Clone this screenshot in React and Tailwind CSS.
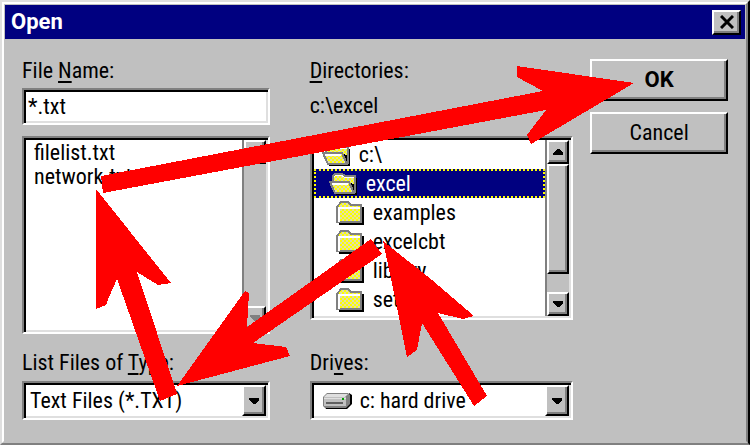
import React, { useState } from 'react';

const raised =
  'bg-[#c0c0c0] border-2 border-t-white border-l-white border-r-black border-b-black shadow-[inset_-2px_-2px_0_#808080]';
const sunken =
  'bg-white border-2 border-t-[#808080] border-l-[#808080] border-r-white border-b-white p-0.5 shadow-[inset_2px_2px_0_#000,inset_-2px_-2px_0_#dfdfdf]';

const files = ['filelist.txt', 'network.txt'];

const folders = [
  { name: 'c:\\', open: true, indent: 'pl-[8px]' },
  { name: 'excel', open: true, indent: 'pl-[15px]' },
  { name: 'examples', open: false, indent: 'pl-[22px]' },
  { name: 'excelcbt', open: false, indent: 'pl-[22px]' },
  { name: 'library', open: false, indent: 'pl-[22px]' },
  { name: 'setup', open: false, indent: 'pl-[22px]' }
];

const arrows = [
  '101,176 543,91 517,77 517,66 634,83 531,144 527,135 546,110 103,193',
  '96,189 171,283 158,285 137,272 177,394 160,401 117,279 109,297 106,305 96,309',
  '371,239 382,254 253,343 286,347 290,356 177,386 245,291 249,293 247,327',
  '383,241 432,280 474,316 463,319 438,313 487,396 474,406 422,323 417,350 407,357 397,307'
];

const FolderIcon = ({ open }) => (
  <svg width="28" height="24" viewBox="0 0 28 24" className="shrink-0" shapeRendering="crispEdges" aria-hidden="true">
    <defs>
      <pattern id="dither" width="4" height="4" patternUnits="userSpaceOnUse">
        <rect width="4" height="4" fill="#ffff00" />
        <rect width="2" height="2" fill="#dcdcb4" />
        <rect x="2" y="2" width="2" height="2" fill="#dcdcb4" />
      </pattern>
    </defs>
    {open ? (
      <>
        <path d="M26 6 H28 V23 H7 V21 H26 Z" fill="#000" />
        <path d="M4 10 V4 L6 2 H13 L16 4 H26 V20 H22 Z" fill="url(#dither)" stroke="#808080" strokeWidth="2" />
        <path d="M5 5 L7 3 H12 L15 5 H25" fill="none" stroke="#fff" strokeWidth="1" />
        <path d="M20 11 L25 19 V12 Z" fill="#000" />
        <path d="M1 10 H20 L25 21 H6 Z" fill="url(#dither)" stroke="#808080" strokeWidth="2" />
        <path d="M3 12 H19" stroke="#fff" strokeWidth="2" />
      </>
    ) : (
      <>
        <path d="M25 6 H28 V24 H3 V21 H25 Z" fill="#000" />
        <path d="M1 21 V6 L5 1 H12 L15 4 H25 V21 Z" fill="url(#dither)" stroke="#808080" strokeWidth="2" />
        <path d="M3 21 V7 H24" fill="none" stroke="#fff" strokeWidth="2" />
      </>
    )}
  </svg>
);

const DriveIcon = () => (
  <svg width="30" height="18" viewBox="0 0 30 18" className="ml-2 shrink-0" aria-hidden="true">
    <path d="M4 17 H25 L30 12 V3 L27 1 V12 L24 15 H3 Z" fill="#000" />
    <path d="M5 1 H26 L28 3 V12 L24 16 H3 L1 14 V5 Z" fill="#808080" />
    <path d="M5 2 H26 L23 5 H2 Z" fill="#dfdfdf" />
    <rect x="2" y="6" width="22" height="8" fill="#c0c0c0" />
    <path d="M2 6 H24" stroke="#fff" />
    <path d="M4 11 H21" stroke="#606060" strokeWidth="2" />
    <rect x="20" y="6" width="2" height="2" fill="#00a000" />
  </svg>
);

const Triangle = ({ up, disabled }) => (
  <svg width="10" height="6" viewBox="0 0 10 6" shapeRendering="crispEdges" aria-hidden="true">
    <path d={up ? 'M0 6 V4 L4 0 H6 L10 4 V6 Z' : 'M0 0 V2 L4 6 H6 L10 2 V0 Z'} fill={disabled ? '#808080' : '#000'} />
  </svg>
);

const ScrollBar = ({ disabled }) => (
  <div className="flex w-6 shrink-0 flex-col border-l-2 border-[#808080] bg-[#c0c0c0]">
    <button type="button" aria-label="Scroll up" disabled={disabled} className={`flex h-6 items-center justify-center ${raised}`}>
      <Triangle up disabled={disabled} />
    </button>
    {!disabled && <div className={`h-[110px] ${raised}`} />}
    <div className="flex-1" />
    <button type="button" aria-label="Scroll down" disabled={disabled} className={`flex h-6 items-center justify-center ${raised}`}>
      <Triangle disabled={disabled} />
    </button>
  </div>
);

const ComboBox = ({ id, icon, option, className }) => (
  <div className={`mt-1.5 flex h-[39px] items-center ${sunken}`}>
    {icon}
    <select id={id} className={`h-full min-w-0 flex-1 appearance-none bg-transparent outline-none ${className}`}>
      <option>{option}</option>
    </select>
    <span className={`pointer-events-none flex h-full w-6 shrink-0 items-center justify-center ${raised}`}>
      <Triangle />
    </span>
  </div>
);

const App = () => {
  const [fileName, setFileName] = useState('*.txt');
  const [folder, setFolder] = useState('excel');

  return (
    <div className="relative bg-[#c0c0c0] border-2 border-t-[#dfdfdf] border-l-[#dfdfdf] border-r-black border-b-[#808080] font-['Roboto_Condensed','Liberation_Sans',sans-serif] text-[22px] leading-6 text-black">
      <div className="border-2 border-t-white border-l-white border-r-[#808080] border-b-[#c0c0c0] p-px">
        {/* Title bar */}
        <div className="flex h-[34px] items-center justify-between bg-[#000080] pl-1.5 pr-1">
          <h1 className="font-['Roboto','Liberation_Sans',sans-serif] text-[22px] font-bold text-white">Open</h1>
          <button type="button" aria-label="Close" className={`flex h-[25px] w-[29px] items-center justify-center ${raised}`}>
            <svg width="14" height="14" viewBox="0 0 14 14" aria-hidden="true">
              <path d="M1 1 L13 13 M13 1 L1 13" stroke="#000" strokeWidth="3" />
            </svg>
          </button>
        </div>

        <div className="flex px-[17px] pb-5 pt-5">
          {/* Files */}
          <div className="mr-10 flex min-w-0 flex-[248] flex-col">
            <label htmlFor="file-name">
              File <u className="underline-offset-3">N</u>ame:
            </label>
            <input
              id="file-name"
              type="text"
              value={fileName}
              onChange={(e) => setFileName(e.target.value)}
              className={`mt-[5px] h-[37px] w-full pl-1 outline-none ${sunken}`}
            />
            <div className={`mt-[11px] flex h-[198px] ${sunken}`}>
              <ul role="listbox" aria-label="Files" className="min-w-0 flex-1 pt-px pl-2">
                {files.map((file) => (
                  <li key={file} role="option" aria-selected={false} onClick={() => setFileName(file)}>
                    {file}
                  </li>
                ))}
              </ul>
              <ScrollBar disabled />
            </div>
            <label htmlFor="file-type" className="mt-[17px]">
              List Files of <u className="underline-offset-3">T</u>ype:
            </label>
            <ComboBox id="file-type" option="Text Files (*.TXT)" className="pl-1" />
          </div>

          {/* Directories */}
          <div className="mr-[17px] flex min-w-0 flex-[264] flex-col">
            <p>
              <u className="underline-offset-3">D</u>irectories:
            </p>
            <p className="mt-[11px]">c:\excel</p>
            <div className={`mt-[18px] flex h-[184px] ${sunken}`}>
              <ul role="listbox" aria-label="Directories" className="min-w-0 flex-1 overflow-hidden">
                {folders.map((f) => (
                  <li
                    key={f.name}
                    role="option"
                    aria-selected={folder === f.name}
                    onClick={() => setFolder(f.name)}
                    className={`flex h-[29px] items-center gap-[9px] ${f.indent} ${
                      folder === f.name ? 'bg-[#000080] text-white outline-2 -outline-offset-2 outline-dotted outline-[#ffff00]' : ''
                    }`}
                  >
                    <FolderIcon open={f.open} />
                    {f.name}
                  </li>
                ))}
              </ul>
              <ScrollBar />
            </div>
            <label htmlFor="drives" className="mt-auto">
              Dri<u className="underline-offset-3">v</u>es:
            </label>
            <ComboBox id="drives" icon={<DriveIcon />} option="c: hard drive" className="pl-2" />
          </div>

          {/* Actions */}
          <div className="flex min-w-0 flex-[138] flex-col gap-[11px]">
            <button type="button" className={`h-[42px] font-['Roboto','Liberation_Sans',sans-serif] text-[22px] font-bold ${raised}`}>
              OK
            </button>
            <button type="button" className={`h-[42px] ${raised}`}>
              Cancel
            </button>
          </div>
        </div>
      </div>

      {/* Arrows drawn over the dialog, in the order of the steps */}
      <svg
        className="pointer-events-none absolute -left-0.5 -top-0.5"
        width="750"
        height="445"
        viewBox="0 0 750 445"
        shapeRendering="crispEdges"
        aria-hidden="true"
      >
        {arrows.map((points) => (
          <polygon key={points} points={points} fill="#ff0000" />
        ))}
      </svg>
    </div>
  );
};

export default App;
